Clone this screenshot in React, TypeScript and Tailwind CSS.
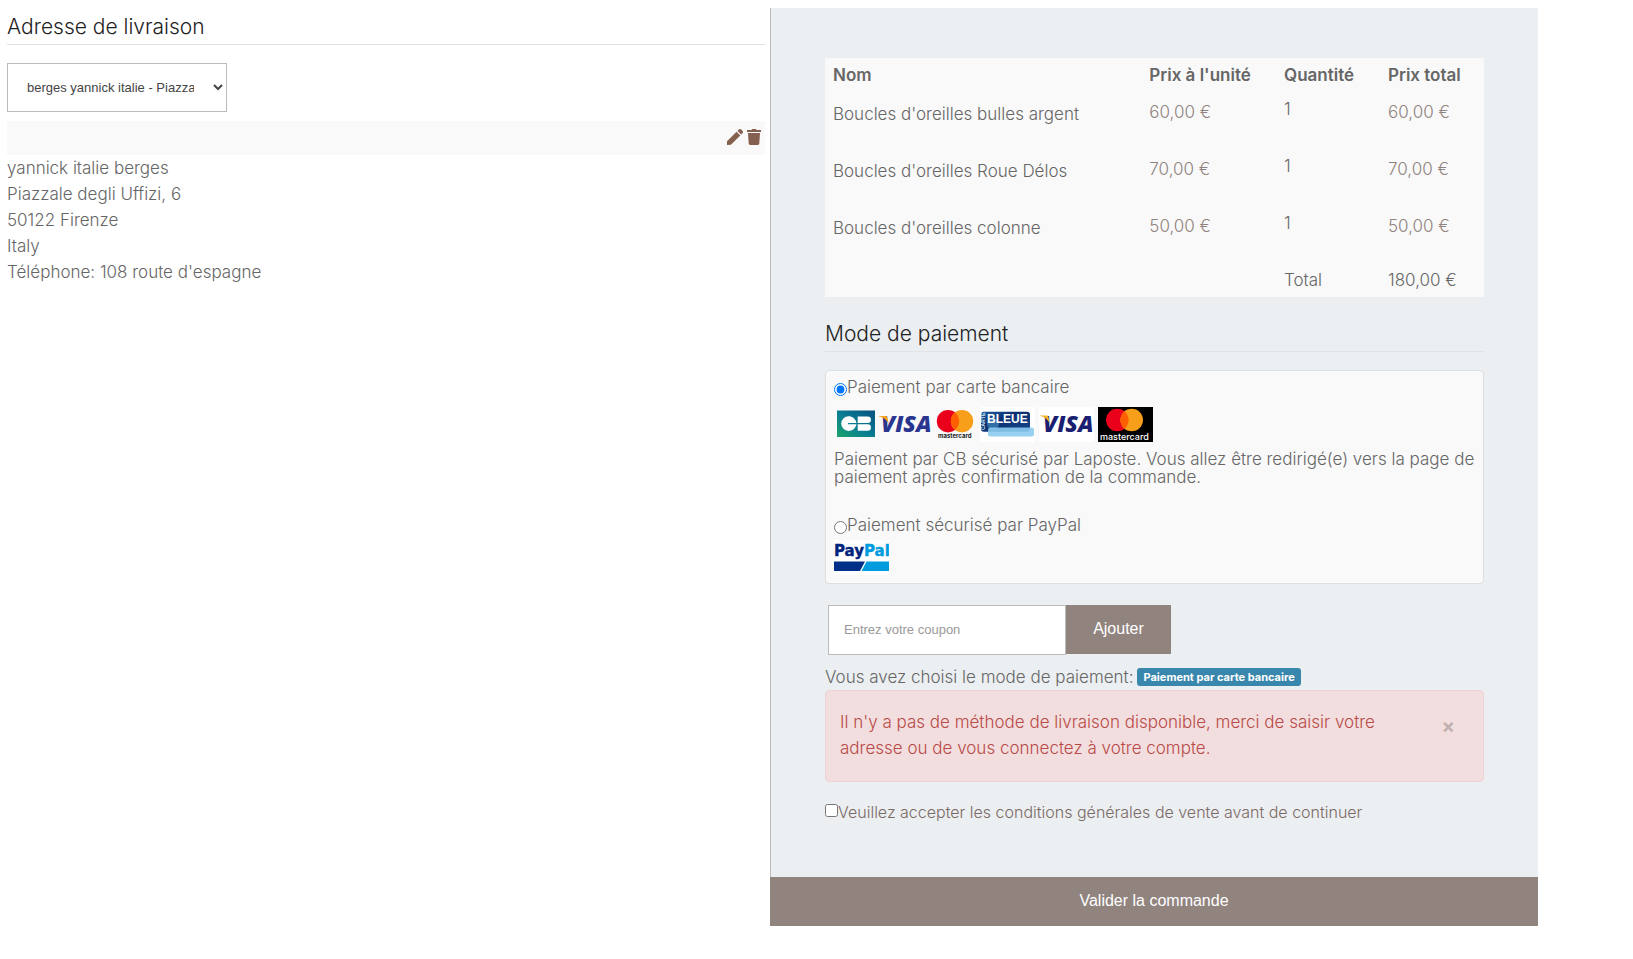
import { useState } from 'react';

type Item = { name: string; unit: string; qty: number; total: string };

const ITEMS: Item[] = [
  { name: "Boucles d'oreilles bulles argent", unit: '60,00 €', qty: 1, total: '60,00 €' },
  { name: "Boucles d'oreilles Roue Délos", unit: '70,00 €', qty: 1, total: '70,00 €' },
  { name: "Boucles d'oreilles colonne", unit: '50,00 €', qty: 1, total: '50,00 €' },
];

const ADDRESS = [
  'yannick italie berges',
  'Piazzale degli Uffizi, 6',
  '50122 Firenze',
  'Italy',
  "Téléphone: 108 route d'espagne",
];

function PencilIcon() {
  return (
    <svg viewBox="0 0 16 16" className="h-4 w-4" fill="currentColor" aria-hidden="true">
      <path d="M0 12.2 9.6 2.8l3.7 3.7L3.9 15.8 0 16z" />
      <path d="M10.5 1.9 11.8.6a1.8 1.8 0 0 1 2.5 0l1.1 1.2a1.8 1.8 0 0 1 0 2.5l-1.3 1.3z" />
    </svg>
  );
}

function TrashIcon() {
  return (
    <svg viewBox="0 0 14 16" className="h-4 w-[14px]" fill="currentColor" aria-hidden="true">
      <path d="M0 1h4.5l.6-1h3.8l.6 1H14v2H0z" />
      <path d="M1 4h12l-.7 10.6a1.5 1.5 0 0 1-1.5 1.4H3.2a1.5 1.5 0 0 1-1.5-1.4z" />
    </svg>
  );
}

// CB + Visa + Mastercard on a single strip
function CardStrip() {
  return (
    <svg viewBox="0 0 142 35" className="h-[35px] w-[142px]" role="img" aria-label="CB, Visa, Mastercard">
      <defs>
        <linearGradient id="cb" x1="0" y1="1" x2="1" y2="0">
          <stop offset="0" stopColor="#1ba56a" />
          <stop offset="0.45" stopColor="#0a7f93" />
          <stop offset="1" stopColor="#07517f" />
        </linearGradient>
      </defs>
      <rect x="3" y="3.5" width="38" height="26.5" fill="url(#cb)" />
      <path
        d="M14.5 9.3c3.8 0 7 2.4 8 6.7h-8.5v1.2h8.5c-1 4.3-4.2 6.7-8 6.7a7.3 7.3 0 0 1 0-14.6z"
        fill="#fff"
      />
      <path
        d="M23.7 9.5h10a3.2 3.2 0 0 1 0 6.5h-10zM23.7 17.2h10a3.2 3.2 0 0 1 0 6.5h-10z"
        fill="#fff"
      />
      <text
        x="47"
        y="25"
        fontFamily="Open Sans, sans-serif"
        fontSize="23"
        fontWeight="800"
        fontStyle="italic"
        fill="#2a3590"
      >
        VISA
      </text>
      <path d="M45 9h6.5c1 0 1.7.6 1.9 1.5l1.3 6.5C52.5 12.5 49 10.3 45 9.6z" fill="#f7a11c" />
      <circle cx="114" cy="14.2" r="11.2" fill="#eb001b" />
      <circle cx="128" cy="14.2" r="11.2" fill="#f79e1b" />
      <path d="M121 5.5a11.2 11.2 0 0 1 0 17.4a11.2 11.2 0 0 1 0-17.4z" fill="#ff5f00" />
      <text x="104" y="31" fontFamily="Inter, sans-serif" fontSize="6" fontWeight="700" fill="#222">
        mastercard
      </text>
    </svg>
  );
}

function CarteBleueLogo() {
  return (
    <svg viewBox="0 0 55 35" className="h-[35px] w-[55px]" role="img" aria-label="Carte Bleue">
      <defs>
        <linearGradient id="bleue" x1="0" y1="0" x2="1" y2="1">
          <stop offset="0" stopColor="#1d5c9e" />
          <stop offset="0.4" stopColor="#0b2f70" />
          <stop offset="1" stopColor="#15488b" />
        </linearGradient>
      </defs>
      <rect width="55" height="35" fill="#fff" />
      <rect x="1" y="4.7" width="49" height="20" rx="3" fill="url(#bleue)" />
      <ellipse cx="13" cy="17" rx="6" ry="6" fill="#5aa9da" opacity="0.5" />
      <text
        transform="translate(5 23) rotate(-90)"
        fontFamily="Liberation Sans, sans-serif"
        fontSize="5"
        fontWeight="700"
        fill="#d5e9f7"
      >
        CARTE
      </text>
      <text x="7" y="16" fontFamily="Liberation Sans, sans-serif" fontSize="12" fontWeight="700" fill="#fff">
        BLEUE
      </text>
      <rect x="8" y="20.5" width="46" height="9" rx="2.5" fill="#8ccbee" opacity="0.9" />
    </svg>
  );
}

function VisaLogo() {
  return (
    <svg viewBox="0 0 55 35" className="h-[35px] w-[55px]" role="img" aria-label="Visa">
      <rect width="55" height="35" fill="#fff" />
      <text
        x="4"
        y="25"
        fontFamily="Open Sans, sans-serif"
        fontSize="23"
        fontWeight="800"
        fontStyle="italic"
        fill="#1a1f71"
      >
        VISA
      </text>
      <path d="M1 8.5h6.5c1 0 1.7.6 1.9 1.5l1.3 6.5C8.5 12 5 9.8 1 9.1z" fill="#f7b021" />
    </svg>
  );
}

function MastercardLogo() {
  return (
    <svg viewBox="0 0 55 35" className="h-[35px] w-[55px]" role="img" aria-label="Mastercard">
      <rect width="55" height="35" fill="#000" />
      <circle cx="19.3" cy="13" r="11.3" fill="#eb001b" />
      <circle cx="33.7" cy="13" r="11.3" fill="#f79e1b" />
      <path d="M26.5 4.3a11.3 11.3 0 0 1 0 17.4a11.3 11.3 0 0 1 0-17.4z" fill="#ff5f00" />
      <text x="2" y="32.5" fontFamily="Inter, sans-serif" fontSize="9" fontWeight="500" fill="#fff">
        mastercard
      </text>
    </svg>
  );
}

function PaypalLogo() {
  return (
    <svg viewBox="0 0 55 35" className="mt-[2px] h-[35px] w-[55px]" role="img" aria-label="PayPal">
      <rect width="55" height="35" fill="#fff" />
      <text
        x="0"
        y="15.5"
        fontFamily="DejaVu Sans, sans-serif"
        fontSize="15"
        fontWeight="700"
        fill="#00247d"
        stroke="#00247d"
        strokeWidth="0.4"
      >
        Pay
        <tspan fill="#009cde" stroke="#009cde">
          Pal
        </tspan>
      </text>
      <path d="M0 21.5h31L26 31H0z" fill="#012f87" />
      <path d="M32.5 21.5H55V31H27.5z" fill="#009cde" />
    </svg>
  );
}

function SectionTitle({ children }: { children: string }) {
  return (
    <h2 className="border-b border-[#e0e2e4] pt-px pb-[3px] text-[21px]/[28px] font-light text-[#222]">
      {children}
    </h2>
  );
}

function OrderTable() {
  return (
    <table className="w-full table-fixed bg-[#f9f9f9] text-left">
      <colgroup>
        <col className="w-[48%]" />
        <col />
        <col className="w-[104px]" />
        <col className="w-[104px]" />
      </colgroup>
      <thead>
        <tr>
          {['Nom', "Prix à l'unité", 'Quantité', 'Prix total'].map((h) => (
            <th key={h} className="px-2 py-1 font-semibold">
              {h}
            </th>
          ))}
        </tr>
      </thead>
      <tbody>
        {ITEMS.map((item) => (
          <tr key={item.name} className="h-[57px] align-top">
            <td className="px-2 pt-[9px]">{item.name}</td>
            <td className="px-2 pt-[7px] text-[#90837e]">{item.unit}</td>
            <td className="px-2 pt-1">{item.qty}</td>
            <td className="px-2 pt-[7px] text-[#90837e]">{item.total}</td>
          </tr>
        ))}
        <tr>
          <td colSpan={2} />
          <td className="px-2 py-1">Total</td>
          <td className="px-2 py-1">180,00 €</td>
        </tr>
      </tbody>
    </table>
  );
}

export default function App() {
  const [method, setMethod] = useState<'card' | 'paypal'>('card');
  const [coupon, setCoupon] = useState('');
  const [accepted, setAccepted] = useState(false);
  const [alertOpen, setAlertOpen] = useState(true);

  return (
    <div className="flex items-stretch gap-[5px] bg-white pt-2 pr-[95px] pb-8 pl-[7px] font-['Inter',sans-serif] text-[17px]/[26px] font-light text-[#666]">
      <section className="min-w-0 flex-[758] pt-1">
        <SectionTitle>Adresse de livraison</SectionTitle>
        <select
          aria-label="Adresse de livraison"
          className="mt-[18px] block h-[49px] w-[220px] border border-[#bbb] bg-white pr-4 pl-[15px] font-['Liberation_Sans',sans-serif] text-[13px] font-normal text-[#444]"
        >
          <option>berges yannick italie - Piazzale degli Uffizi, 6</option>
        </select>
        <div className="mt-[9px] flex h-[34px] items-center justify-end gap-1 bg-[#f9f9f9] pr-1 pb-[2px] text-[#85604f]">
          <button type="button" aria-label="Modifier l'adresse">
            <PencilIcon />
          </button>
          <button type="button" aria-label="Supprimer l'adresse">
            <TrashIcon />
          </button>
        </div>
        <address className="not-italic">
          {ADDRESS.map((line) => (
            <p key={line}>{line}</p>
          ))}
        </address>
      </section>

      <section className="min-w-0 flex-[768] bg-[#ebeff2]">
        <div className="border-l border-[#bbb] px-[54px] pt-[50px] pb-[52px]">
          <OrderTable />

          <div className="mt-[22px]">
            <SectionTitle>Mode de paiement</SectionTitle>
          </div>

          <div className="mt-[18px] rounded border border-[#dcdee0] bg-[#f9f9f9] px-2 pt-[3px] pb-2">
            <label className="flex items-center">
              <input
                type="radio"
                name="method"
                checked={method === 'card'}
                onChange={() => setMethod('card')}
                className="mt-1 h-[13px] w-[13px]"
              />
              Paiement par carte bancaire
            </label>
            <div className="mt-[7px] flex gap-1">
              <CardStrip />
              <CarteBleueLogo />
              <VisaLogo />
              <MastercardLogo />
            </div>
            <p className="mt-2 leading-[18px]">
              Paiement par CB sécurisé par Laposte. Vous allez être redirigé(e) vers la page de paiement après
              confirmation de la commande.
            </p>
            <label className="mt-[26px] flex items-center">
              <input
                type="radio"
                name="method"
                checked={method === 'paypal'}
                onChange={() => setMethod('paypal')}
                className="mt-1 h-[13px] w-[13px]"
              />
              Paiement sécurisé par PayPal
            </label>
            <PaypalLogo />
          </div>

          <form className="mt-[21px] flex items-start pl-[3px]" onSubmit={(e) => e.preventDefault()}>
            <input
              type="text"
              value={coupon}
              onChange={(e) => setCoupon(e.target.value)}
              placeholder="Entrez votre coupon"
              aria-label="Coupon"
              className="h-[50px] w-[238px] border border-[#bbb] bg-white px-[15px] pb-[2px] font-['Liberation_Sans',sans-serif] text-[13px] font-normal placeholder:text-[#999]"
            />
            <button
              type="submit"
              className="h-[49px] w-[105px] bg-[#91847f] pb-[2px] font-['Liberation_Sans',sans-serif] text-base font-normal text-white"
            >
              Ajouter
            </button>
          </form>

          <p className="mt-[9px] flex items-center gap-1">
            Vous avez choisi le mode de paiement:
            <span className="rounded-[3px] bg-[#3a87ad] px-[6px] text-[11px]/[18px] font-bold text-white">
              Paiement par carte bancaire
            </span>
          </p>

          {alertOpen && (
            <div className="flex items-start justify-between rounded border border-[#eed3d7] bg-[#f2dede] pt-[18px] pr-7 pb-5 pl-[14px] text-[#b94a48]">
              <p className="max-w-[560px]">
                Il n'y a pas de méthode de livraison disponible, merci de saisir votre adresse ou de vous connectez à
                votre compte.
              </p>
              <button
                type="button"
                aria-label="Fermer"
                onClick={() => setAlertOpen(false)}
                className="mt-[3px] text-xl font-bold text-black opacity-20"
              >
                ×
              </button>
            </div>
          )}

          <label className="mt-[17px] flex items-center text-base/[26px] text-[#7b6a64]">
            <input
              type="checkbox"
              checked={accepted}
              onChange={(e) => setAccepted(e.target.checked)}
              className="mb-1 h-[13px] w-[13px]"
            />
            Veuillez accepter les conditions générales de vente avant de continuer
          </label>
        </div>
        <button
          type="button"
          className="block h-[49px] w-full bg-[#91847f] pb-[2px] font-['Liberation_Sans',sans-serif] text-base font-normal text-white"
        >
          Valider la commande
        </button>
      </section>
    </div>
  );
}
